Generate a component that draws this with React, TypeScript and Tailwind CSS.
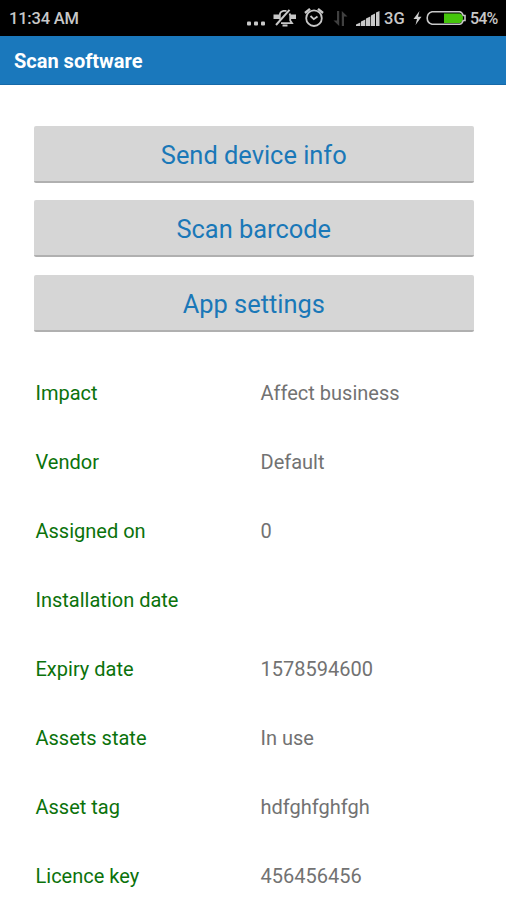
import React from 'react';

const actions = ['Send device info', 'Scan barcode', 'App settings'];

const details = [
  { label: 'Impact', value: 'Affect business' },
  { label: 'Vendor', value: 'Default' },
  { label: 'Assigned on', value: '0' },
  { label: 'Installation date', value: '' },
  { label: 'Expiry date', value: '1578594600' },
  { label: 'Assets state', value: 'In use' },
  { label: 'Asset tag', value: 'hdfghfghfgh' },
  { label: 'Licence key', value: '456456456' },
];

function DotsIcon() {
  return (
    <svg width="18" height="36" viewBox="0 0 18 36" fill="#c8c8c8">
      <rect x="0" y="21.5" width="4" height="4" rx="1" />
      <rect x="7" y="21.5" width="4" height="4" rx="1" />
      <rect x="14" y="21.5" width="4" height="4" rx="1" />
    </svg>
  );
}

function VibrateIcon() {
  return (
    <svg width="24" height="36" viewBox="0 0 24 36" fill="none" stroke="#c8c8c8" strokeWidth="1.8">
      <path d="M13.5 10.8H10.5Q6.8 11.5 6.8 15V19.5" />
      <path d="M16.5 13.5Q17.2 14.5 17.2 16V20.5L19 23.2H8" />
      <path d="M9.5 25.5H14.5" strokeWidth="2" />
      <path d="M3 25L16.5 9.8" strokeWidth="2" />
      <path d="M0.5 16.8H6.5M17.5 16.8H23" strokeWidth="4.4" />
    </svg>
  );
}

function AlarmIcon() {
  return (
    <svg width="20" height="36" viewBox="0 0 20 36" fill="none" stroke="#c8c8c8" strokeWidth="1.8">
      <circle cx="10" cy="18.2" r="7.8" />
      <path d="M6.5 16L9.8 19.2L13.5 16.5" />
      <path d="M1 13L6 8.8M14 8.8L19 13" strokeWidth="2.4" />
    </svg>
  );
}

function DataIcon() {
  return (
    <svg width="15" height="36" viewBox="0 0 15 36" fill="#404040">
      <path d="M4 11H6.2V26L0.5 20.5H4Z" />
      <path d="M8.8 26H11V16.5H14.5L8.8 11Z" />
    </svg>
  );
}

function SignalIcon() {
  return (
    <svg width="24" height="36" viewBox="0 0 24 36" fill="#c8c8c8">
      <path d="M0 26V24.5L4.3 22.5V26Z" />
      <path d="M5 26V21.5L9.3 19.5V26Z" />
      <path d="M10 26V18.5L14.3 16.5V26Z" />
      <path d="M15 26V15.5L19 13.5V26Z" />
      <path d="M20 26V12.5L23.5 11V26Z" />
    </svg>
  );
}

function BoltIcon() {
  return (
    <svg width="9" height="36" viewBox="0 0 9 36" fill="#d0d0d0">
      <path d="M6.5 11L0.5 19H4L2.5 25L8.5 16.8H5Z" />
    </svg>
  );
}

function BatteryIcon() {
  return (
    <svg width="41" height="36" viewBox="0 0 41 36" fill="none">
      <path d="M18 13.5H34Q37 15 37 18Q37 21.5 34 23H18Z" fill="#45c60b" />
      <path
        d="M6 11.8H33.5Q36 12 37.2 15.5H39V20.5H37.2Q36 24.2 33.5 24.2H6Q1.2 23 1.2 18Q1.2 13 6 11.8Z"
        stroke="#c8c8c8"
        strokeWidth="1.6"
      />
    </svg>
  );
}

function StatusBar() {
  return (
    <div className="flex h-9 items-center justify-between bg-black pl-[9px] pr-2 text-[#c8c8c8]">
      <span className="pt-[2px] text-[16.5px] font-medium tracking-[-0.2px]">11:34 AM</span>
      <div className="flex items-center">
        <DotsIcon />
        <span className="ml-2"><VibrateIcon /></span>
        <span className="ml-[7px]"><AlarmIcon /></span>
        <span className="ml-[9px]"><DataIcon /></span>
        <span className="ml-2"><SignalIcon /></span>
        <span className="ml-1 w-[22px] pt-[2px] text-[16.5px] font-medium">3G</span>
        <span className="ml-[7px]"><BoltIcon /></span>
        <span className="ml-1"><BatteryIcon /></span>
        <span className="ml-[3px] w-[28px] whitespace-nowrap pt-[2px] text-[16px] font-medium tracking-[-0.8px]">54%</span>
      </div>
    </div>
  );
}

export default function App() {
  return (
    <div className="h-[900px] w-[506px] overflow-hidden bg-white font-['Roboto',sans-serif]">
      <StatusBar />

      <header className="flex h-[49px] items-center border-b border-[#1669a8] bg-[#1a78bc] pl-[14px] pt-[2px]">
        <h1 className="text-[20px] font-bold text-white">Scan software</h1>
      </header>

      {/* Actions */}
      <div className="flex flex-col gap-[17.5px] pl-[34px] pr-[32.5px] pt-[40.5px]">
        {actions.map((action) => (
          <button
            key={action}
            className="h-[57px] rounded-[2px] border-b-2 border-[#b0b0b0] bg-[#d6d6d6] pt-[5px] text-[25.4px] leading-none text-[#1a78b8]"
          >
            {action}
          </button>
        ))}
      </div>

      {/* Asset details */}
      <dl className="pl-[35.5px] pt-[26.5px]">
        {details.map(({ label, value }) => (
          <div key={label} className="flex h-[69px] items-center text-[20px]">
            <dt className="w-[225px] text-[#0b720b]">{label}</dt>
            <dd className="text-[#727272]">{value}</dd>
          </div>
        ))}
      </dl>
    </div>
  );
}
